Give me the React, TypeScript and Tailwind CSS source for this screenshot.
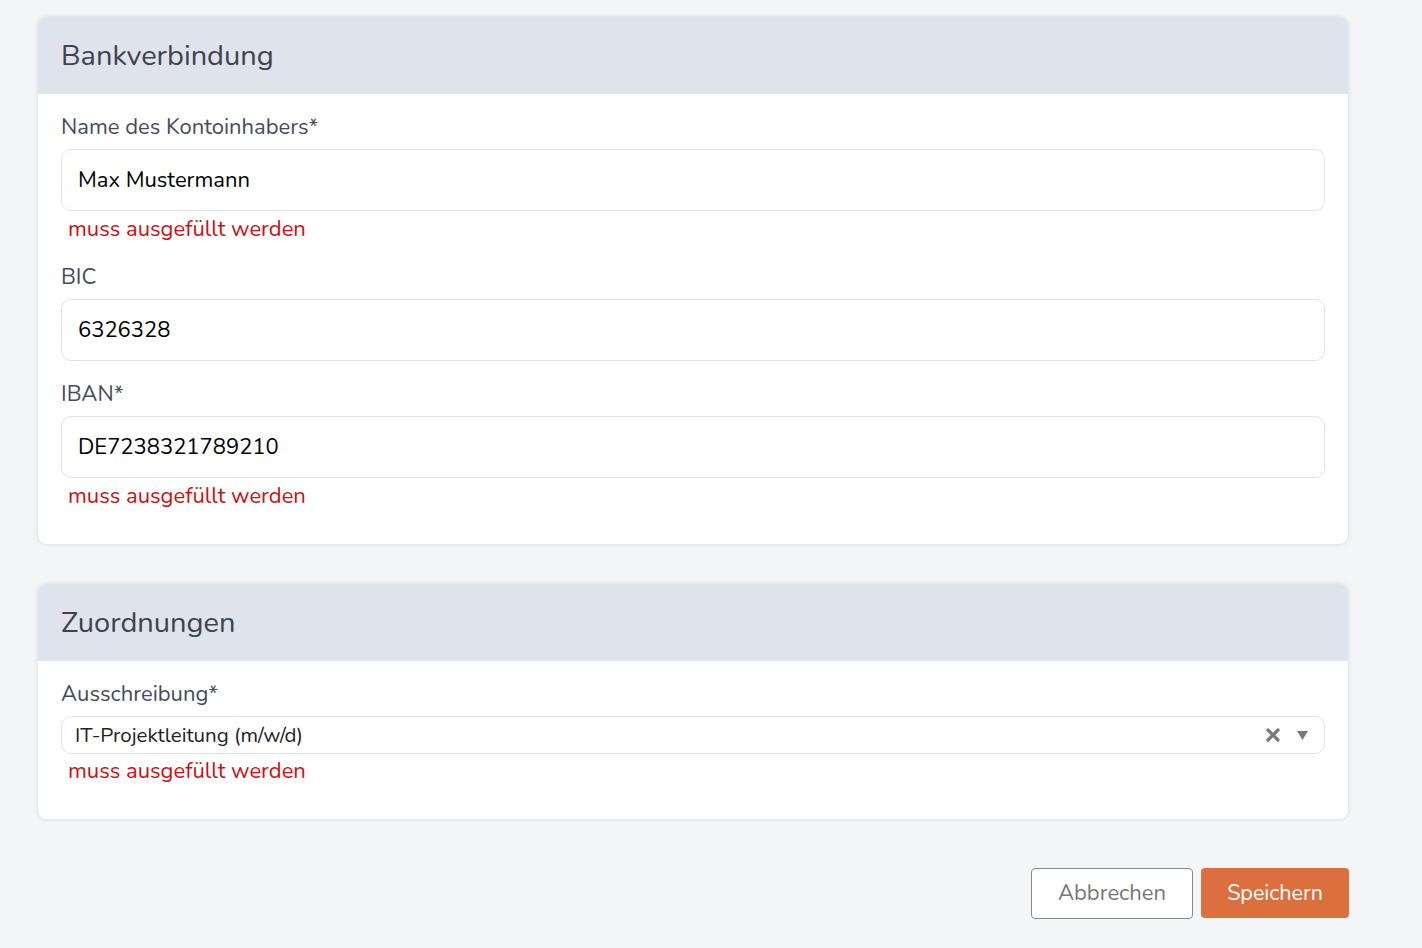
import React from "react";

const font = { fontFamily: "Nunito, Lato, 'Open Sans', sans-serif" };

function Field({ label, value, error }: { label: string; value: string; error?: boolean }) {
  return (
    <div className="flex flex-col">
      <div className="text-[22px] leading-[28px] text-[#454c57]">{label}</div>
      <div className="mt-2 h-[62px] rounded-[10px] border border-[#e0e3eb] bg-white flex items-center pl-[16px] text-[22px] text-black">
        {value}
      </div>
      {error && (
        <div className="mt-1 pl-[7px] text-[22px] leading-[28px] text-[#cc1010]">muss ausgefüllt werden</div>
      )}
    </div>
  );
}

function Card({ title, children }: { title: string; children: React.ReactNode }) {
  return (
    <div className="rounded-[10px] bg-white shadow-[0_0_4px_rgba(0,0,0,0.08)] border border-[#e6e9ef] overflow-hidden">
      <div className="h-[77px] bg-[#dfe3eb] flex items-center pl-[23px] text-[29px] text-[#3d4450]">{title}</div>
      <div className="px-[23px] pt-[19px] pb-[34px]">{children}</div>
    </div>
  );
}

export default function App() {
  return (
    <div className="min-h-[948px] w-full bg-[#f4f5f7]" style={font}>
      <div className="w-[1312px] ml-[37px] pt-[16px] flex flex-col">
        <Card title="Bankverbindung">
          <div className="flex flex-col">
            <div className="mb-[20px]">
              <Field label="Name des Kontoinhabers*" value="Max Mustermann" error />
            </div>
            <div className="mb-[19px]">
              <Field label="BIC" value="6326328" />
            </div>
            <Field label="IBAN*" value="DE7238321789210" error />
          </div>
        </Card>
        <div className="h-[38px]" />
        <Card title="Zuordnungen">
          <div className="flex flex-col">
            <div className="text-[22px] leading-[28px] text-[#454c57]">Ausschreibung*</div>
            <div className="mt-2 h-[38px] rounded-[10px] border border-[#e0e3eb] bg-white flex items-center pl-[13px] pr-[16px] text-[20.5px] text-[#222]">
              <span className="flex-1">IT-Projektleitung (m/w/d)</span>
              <svg width="14" height="14" viewBox="0 0 14 14" className="mr-[17px]">
                <path d="M2 2 L12 12 M12 2 L2 12" stroke="#7a7a7a" strokeWidth="3.2" strokeLinecap="round" />
              </svg>
              <svg width="11" height="9" viewBox="0 0 11 9">
                <path d="M0 0 H11 L5.5 9 Z" fill="#7a7a7a" />
              </svg>
            </div>
            <div className="mt-[3px] pl-[7px] text-[22px] leading-[28px] text-[#cc1010]">muss ausgefüllt werden</div>
          </div>
        </Card>
        <div className="flex justify-end gap-[8px] mt-[48px]">
          <button className="w-[162px] h-[51px] rounded-[4px] border border-[#8a8a8a] bg-white text-[22px] text-[#777]">
            Abbrechen
          </button>
          <button className="w-[148px] h-[50px] rounded-[4px] bg-[#dc6f3e] text-[21.5px] text-white">Speichern</button>
        </div>
      </div>
    </div>
  );
}
